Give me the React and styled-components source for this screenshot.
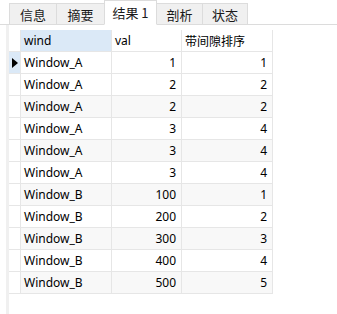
import React from 'react'
import styled, { createGlobalStyle } from 'styled-components'

const GlobalStyle = createGlobalStyle`
  html, body {
    margin: 0;
    padding: 0;
    background: #ffffff;
  }
  body {
    font-family: "Noto Sans", "Noto Sans CJK SC", sans-serif;
    font-size: 12px;
    color: #000;
  }
`

const Page = styled.div`
  width: 337px;
  height: 314px;
  display: flex;
  flex-direction: column;
  overflow: hidden;
`

const TabBar = styled.div`
  display: flex;
  align-items: flex-end;
  height: 25px;
  padding-left: 10px;
  border-bottom: 1px solid #dcdcdc;
  box-sizing: border-box;
`

const Tab = styled.div`
  box-sizing: border-box;
  width: ${p => p.$w}px;
  height: ${p => (p.$active ? 25 : 22)}px;
  margin-bottom: -1px;
  margin-left: -1px;
  display: flex;
  align-items: center;
  justify-content: center;
  font-family: "Noto Sans CJK SC", "Noto Sans", sans-serif;
  font-size: 13px;
  color: #1a1a1a;
  background: ${p => (p.$active ? '#ffffff' : '#f0f0f0')};
  border: 1px solid #dcdcdc;
  border-bottom: 1px solid ${p => (p.$active ? '#ffffff' : '#dcdcdc')};
  position: relative;
  z-index: ${p => (p.$active ? 1 : 0)};
  padding-top: ${p => (p.$active ? 0 : 1)}px;
`

const Body = styled.div`
  flex: 1;
  display: flex;
  padding-left: 6px;
`

const Pane = styled.div`
  flex: 1;
  border-left: 3px solid #f0f0f0;
  padding-top: 5px;
`

const Grid = styled.div`
  display: grid;
  grid-template-columns: 12px 91px 70px 91px;
  grid-auto-rows: 22px;
  width: max-content;
`

const Cell = styled.div`
  box-sizing: border-box;
  border-right: 1px solid #e6e6e6;
  border-bottom: 1px solid #e6e6e6;
  display: flex;
  align-items: center;
  justify-content: ${p => (p.$right ? 'flex-end' : 'flex-start')};
  padding: ${p => (p.$right ? '0 5px 0 0' : '0 0 0 3px')};
  background: ${p => p.$bg || 'transparent'};
  white-space: nowrap;
`

const HeadCell = styled(Cell)`
  font-family: "Noto Sans", "Noto Sans CJK SC", sans-serif;
`

const Indicator = styled(Cell)`
  padding: 0;
  justify-content: center;
`

const Arrow = styled.span`
  width: 0;
  height: 0;
  border-top: 5px solid transparent;
  border-bottom: 5px solid transparent;
  border-left: 6px solid #000;
  margin-left: 1px;
`

const rows = [
  ['Window_A', 1, 1],
  ['Window_A', 2, 2],
  ['Window_A', 2, 2],
  ['Window_A', 3, 4],
  ['Window_A', 3, 4],
  ['Window_A', 3, 4],
  ['Window_B', 100, 1],
  ['Window_B', 200, 2],
  ['Window_B', 300, 3],
  ['Window_B', 400, 4],
  ['Window_B', 500, 5],
]

const tabs = [
  { label: '信息', w: 48 },
  { label: '摘要', w: 49 },
  { label: '结果 1', w: 53, active: true },
  { label: '剖析', w: 47 },
  { label: '状态', w: 46 },
]

export default function App() {
  return (
    <Page>
      <GlobalStyle />
      <TabBar>
        {tabs.map(t => (
          <Tab key={t.label} $w={t.w} $active={t.active}>{t.label}</Tab>
        ))}
      </TabBar>
      <Body>
        <Pane>
          <Grid>
            <Indicator />
            <HeadCell $bg="#dbe9f7">wind</HeadCell>
            <HeadCell>val</HeadCell>
            <HeadCell>带间隙排序</HeadCell>
            {rows.map((r, i) => {
              const bg = i > 0 && i % 2 === 0 ? '#f8f8f8' : '#ffffff'
              return (
                <React.Fragment key={i}>
                  <Indicator $bg={i === 0 ? '#dbe9f7' : '#ffffff'}>
                    {i === 0 && <Arrow />}
                  </Indicator>
                  <Cell $bg={bg}>{r[0]}</Cell>
                  <Cell $bg={bg} $right>{r[1]}</Cell>
                  <Cell $bg={bg} $right>{r[2]}</Cell>
                </React.Fragment>
              )
            })}
          </Grid>
        </Pane>
      </Body>
    </Page>
  )
}
